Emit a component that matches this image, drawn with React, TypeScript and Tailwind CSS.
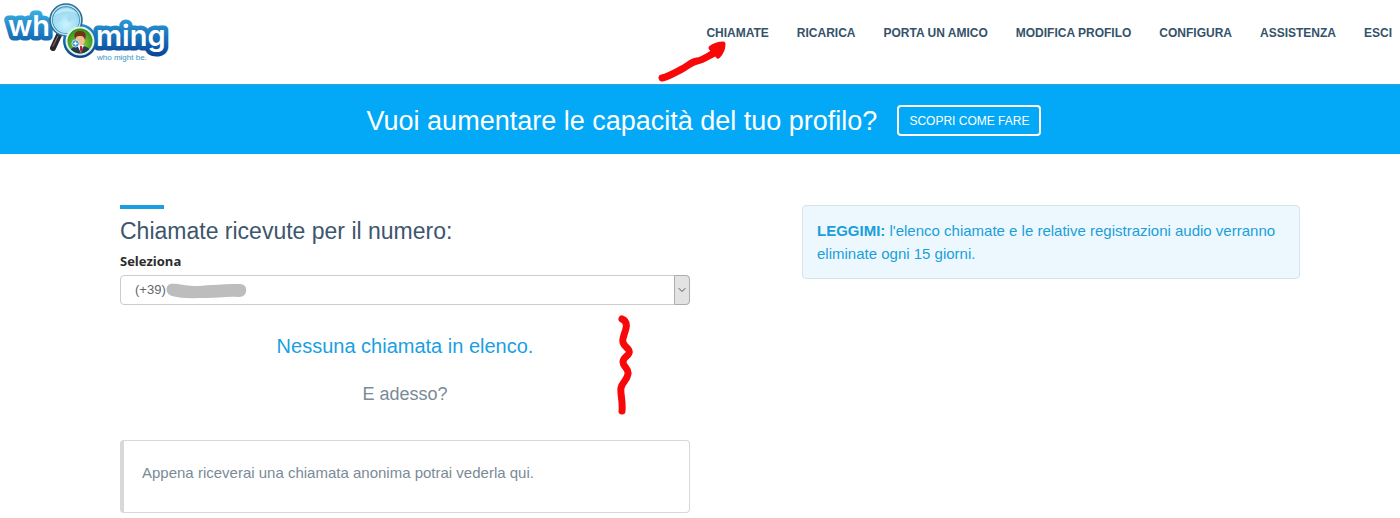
import React, { useState } from "react";
import { ChevronDown } from "lucide-react";

interface NavItem {
  label: string;
  href: string;
}

const NAV_ITEMS: NavItem[] = [
  { label: "CHIAMATE", href: "#chiamate" },
  { label: "RICARICA", href: "#ricarica" },
  { label: "PORTA UN AMICO", href: "#porta-un-amico" },
  { label: "MODIFICA PROFILO", href: "#modifica-profilo" },
  { label: "CONFIGURA", href: "#configura" },
  { label: "ASSISTENZA", href: "#assistenza" },
  { label: "ESCI", href: "#esci" },
];

const NUMBERS = ["(+39)"];

const Logo = () => (
  <svg width="176" height="66" viewBox="0 0 176 66" role="img" aria-label="whooming">
    <defs>
      <linearGradient id="word" x1="0" y1="10" x2="0" y2="58" gradientUnits="userSpaceOnUse">
        <stop offset="0" stopColor="#3bb0e2" />
        <stop offset="0.5" stopColor="#1a78bf" />
        <stop offset="1" stopColor="#0a3f92" />
      </linearGradient>
      <radialGradient id="lens" cx="0.5" cy="0.65" r="0.65">
        <stop offset="0" stopColor="#cdf3fd" />
        <stop offset="0.7" stopColor="#92dcf4" />
        <stop offset="1" stopColor="#58b9df" />
      </radialGradient>
      <radialGradient id="badge" cx="0.5" cy="0.6" r="0.6">
        <stop offset="0" stopColor="#9bdc45" />
        <stop offset="1" stopColor="#27851b" />
      </radialGradient>
      <clipPath id="badgeClip">
        <circle cx="80" cy="41" r="12.5" />
      </clipPath>
    </defs>

    {/* white word with a thick blue outline */}
    <g
      fill="#fff"
      stroke="url(#word)"
      strokeWidth="9"
      strokeLinejoin="round"
      paintOrder="stroke"
      className="font-['Inter',sans-serif] text-[29px] font-semibold"
    >
      <text x="8" y="36">wh</text>
      <text x="96" y="46">ming</text>
    </g>
    <circle cx="80" cy="41" r="17" fill="url(#word)" />

    {/* magnifying glass */}
    <path d="M59 35 53 48" stroke="#2b2530" strokeWidth="6" strokeLinecap="round" />
    <path d="M58 36 53 46" stroke="#85808a" strokeWidth="1" strokeLinecap="round" />
    <circle cx="66" cy="20" r="15" fill="url(#lens)" stroke="#2a6e98" strokeWidth="3.5" />
    <circle cx="66" cy="20" r="14.5" fill="none" stroke="#c6e4ef" strokeWidth="1.3" />
    <path d="M56 17c3-4 6-1 6 1s-3 4-6 3zM67 14c4-3 9 0 9 4-2 3-5 1-6 4-3-1-4-5-3-8z" fill="#a9dcf1" />
    <path d="M54 16C56 8 70 4 78 14 69 10 61 11 54 16z" fill="#fff" opacity="0.45" />

    {/* caller badge */}
    <circle cx="80" cy="41" r="13.5" fill="url(#badge)" stroke="#e4f3df" strokeWidth="2" />
    <g clipPath="url(#badgeClip)">
      <path d="M69 55c0-6 4-8 8-9h6c5 1 8 3 8 9z" fill="#28394f" />
      <path d="M77 45h7l-3 8z" fill="#fff" />
      <path d="M80 46h2l1 4-2 3-1-3z" fill="#ac2734" />
      <ellipse cx="80.500" cy="39.500" rx="4.500" ry="6" fill="#f3bd8f" />
      <path d="M75 39c-2-6 1-8 5-8 5 0 7 3 5 9-1-3-2-4-4-4-3 0-5 0-6 3z" fill="#6e351b" />
    </g>
    <circle cx="75.500" cy="43.500" r="3.600" fill="#2e8fd3" stroke="#d7effc" strokeWidth="0.8" />
    <path d="M73.500 43.500h4M75.500 41.500v4" stroke="#fff" strokeWidth="1.3" />

    <text x="97" y="60" fill="#3296c8" className="font-['Liberation_Sans',sans-serif] text-[8px]">
      who might be.
    </text>
  </svg>
);

export const CallsPage = () => {
  const [number, setNumber] = useState(NUMBERS[0]);

  return (
    <div className="min-h-screen bg-white font-['Liberation_Sans',Arial,sans-serif]">
      <header className="flex h-21 items-start justify-between pr-2">
        <a href="#home" className="shrink-0">
          <Logo />
        </a>
        <nav className="relative mt-6 flex gap-7">
          {NAV_ITEMS.map((item) => (
            <a
              key={item.label}
              href={item.href}
              className="text-xs leading-[18px] font-bold whitespace-nowrap text-[#34526a]"
            >
              {item.label}
            </a>
          ))}
          {/* hand-drawn arrow */}
          <svg
            className="pointer-events-none absolute top-4 -left-12"
            width="72"
            height="44"
            viewBox="0 0 72 44"
            aria-hidden="true"
          >
            <path
              d="M4 38c8-2 14-6 20-9s9-7 15-8 11-5 17-8"
              fill="none"
              stroke="#f80808"
              strokeWidth="7"
              strokeLinecap="round"
            />
            <path
              d="M53 8c4-3 8-4 12-4 0 4-1 8-5 12l-4-5z"
              fill="#f80808"
              stroke="#f80808"
              strokeWidth="5"
              strokeLinejoin="round"
            />
          </svg>
        </nav>
      </header>

      {/* promo banner */}
      <section className="flex h-[70px] items-center justify-center gap-5 border-t border-[#38a0d4] bg-[#03a9f7] pt-0.5 pl-2 text-white">
        <h1 className="text-[27px] leading-9">Vuoi aumentare le capacità del tuo profilo?</h1>
        <button
          type="button"
          className="h-[31px] rounded border-2 border-white px-2.5 text-xs whitespace-nowrap"
        >
          SCOPRI COME FARE
        </button>
      </section>

      <main className="grid grid-cols-[570fr_498fr] items-start gap-28 pt-[51px] pr-25 pl-30">
        <section className="relative">
          <div className="h-1 w-11 bg-[#1a9fe0]" />
          <h2 className="mt-2 text-[23px] leading-7 text-[#3d566e]">
            Chiamate ricevute per il numero:
          </h2>
          <label
            htmlFor="numero"
            className="mt-1.5 block font-['Open_Sans',sans-serif] text-[13px] leading-5 font-bold text-[#2c2c2c]"
          >
            Seleziona
          </label>
          <div className="relative mt-1">
            <select
              id="numero"
              value={number}
              onChange={(e) => setNumber(e.target.value)}
              className="block h-[30px] w-full appearance-none rounded border border-[#ccc] bg-white px-3.5 text-[13px] text-[#666]"
            >
              {NUMBERS.map((n) => (
                <option key={n} value={n}>
                  {n}
                </option>
              ))}
            </select>
            <span className="pointer-events-none absolute inset-y-0 right-0 flex w-4 items-center justify-center rounded-r border border-[#adadad] bg-[#e3e3e3]">
              <ChevronDown className="h-3 w-3 shrink-0 text-[#505050]" />
            </span>
            {/* hidden digits */}
            <svg
              className="pointer-events-none absolute top-2 left-11"
              width="84"
              height="18"
              viewBox="0 0 84 18"
              aria-hidden="true"
            >
              <path
                d="M6 1c8-1 14 2 24 2s24-2 46-2c5 0 7 4 6 8s-4 5-8 5c-10-1-20 1-32 1S18 16 8 13C1 11 1 3 6 1z"
                fill="#bdbdbd"
              />
            </svg>
          </div>

          <p className="mt-[27px] text-center text-xl leading-7 text-[#1a9fe0]">
            Nessuna chiamata in elenco.
          </p>
          <p className="mt-[22px] text-center text-lg leading-6 text-[#7b8a96]">E adesso?</p>

          {/* hand-drawn squiggle */}
          <svg
            className="pointer-events-none absolute top-[108px] right-14"
            width="20"
            height="104"
            viewBox="0 0 20 104"
            aria-hidden="true"
          >
            <path
              d="M8 6c7 3 4 10 2 16-3 8 0 10 4 14 5 6-5 7-5 13 0 5 6 6 5 12-1 7-6 8-7 14s2 12 1 23"
              fill="none"
              stroke="#f80808"
              strokeWidth="7"
              strokeLinecap="round"
              strokeLinejoin="round"
            />
          </svg>

          <div className="mt-[34px] rounded border border-l-4 border-[#d8d8d8] px-[18px] pt-5 pb-[27px]">
            <p className="text-[15px] leading-6 text-[#7b8a96]">
              Appena riceverai una chiamata anonima potrai vederla qui.
            </p>
          </div>
        </section>

        <aside className="rounded border border-[#d4e6ec] bg-[#edf8fe] px-3.5 py-[13px] text-[15px] leading-[23px] text-[#1a9fd9]">
          <strong>LEGGIMI:</strong> l'elenco chiamate e le relative registrazioni audio verranno
          eliminate ogni 15 giorni.
        </aside>
      </main>
    </div>
  );
};

export default CallsPage;
